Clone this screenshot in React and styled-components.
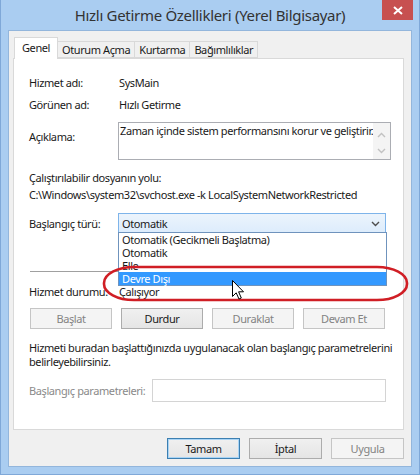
import React from 'react';
import styled, { createGlobalStyle } from 'styled-components';

const GlobalStyle = createGlobalStyle`
  html, body {
    margin: 0;
    padding: 0;
    background: #aacdf1;
  }
  body {
    width: 420px;
    height: 475px;
    overflow: hidden;
    font-family: "Noto Sans", "Open Sans", sans-serif;
    font-size: 11px;
    letter-spacing: -0.4px;
    color: #1a1a1a;
  }
`;

const Window = styled.div`
  position: relative;
  width: 420px;
  height: 475px;
  box-sizing: border-box;
  background: #aacdf1;
  border: 1px solid #7fa8d8;
  border-top: none;
  padding: 0 7px 7px 7px;
  display: flex;
  flex-direction: column;
`;

const TitleBar = styled.div`
  height: 30px;
  display: grid;
  grid-template-columns: 1fr auto 1fr;
  align-items: center;
`;

const Title = styled.div`
  grid-column: 2;
  font-size: 15px;
  letter-spacing: -0.3px;
  color: #333;
  white-space: nowrap;
`;

const CloseButton = styled.div`
  grid-column: 3;
  justify-self: end;
  align-self: start;
  width: 31px;
  height: 20px;
  margin-right: -1px;
  background: #c75050;
  display: flex;
  align-items: center;
  justify-content: center;
`;

const Client = styled.div`
  flex: 1;
  background: #f0f0f0;
  border: 1px solid #93b6dc;
  display: flex;
  flex-direction: column;
  padding: 6px 7px 7px 4px;
`;

const TabStrip = styled.div`
  display: flex;
  align-items: flex-end;
  height: 21px;
  padding-left: 1px;
  position: relative;
  z-index: 1;
`;

const Tab = styled.div`
  box-sizing: border-box;
  height: ${p => (p.$active ? '22px' : '17px')};
  margin-bottom: ${p => (p.$active ? '-1px' : '0')};
  padding: ${p => (p.$active ? '0 7px 3px' : '0 4px')};
  background: ${p => (p.$active ? '#fff' : '#f0f0f0')};
  border: 1px solid #d9d9d9;
  border-bottom: ${p => (p.$active ? 'none' : '1px solid #d9d9d9')};
  border-left: ${p => (p.$active ? '1px solid #d9d9d9' : 'none')};
  display: flex;
  align-items: center;
  white-space: nowrap;
`;

const Panel = styled.div`
  flex: 1;
  background: #fff;
  border: 1px solid #d9d9d9;
  padding: 16px 17px 0 15px;
  display: flex;
  flex-direction: column;
`;

const Row = styled.div`
  display: grid;
  grid-template-columns: ${p => p.$labelWidth || '89px'} 1fr;
  margin-top: ${p => p.$mt || 0}px;
  line-height: ${p => p.$lh || 16}px;
`;

const Label = styled.div`
  padding-top: ${p => p.$pt || 0}px;
  color: ${p => (p.$disabled ? '#8a8a8a' : 'inherit')};
  white-space: nowrap;
`;

const Value = styled.div`
  padding-left: 1px;
  white-space: nowrap;
`;

const TextArea = styled.div`
  height: 38px;
  box-sizing: border-box;
  border: 1px solid #abadb3;
  background: #fff;
  display: flex;
`;

const TextAreaText = styled.div`
  flex: 1;
  padding: 1px 0 0 1px;
  line-height: 14px;
  white-space: nowrap;
`;

const ScrollBar = styled.div`
  width: 17px;
  background: #f4f4f4;
  display: flex;
  flex-direction: column;
  justify-content: space-between;
  align-items: center;
  padding: 9px 0 5px;
`;

const Block = styled.div`
  margin-top: ${p => p.$mt || 0}px;
  line-height: ${p => p.$lh || 17}px;
  white-space: nowrap;
`;

const Combo = styled.div`
  position: relative;
  height: 21px;
  box-sizing: border-box;
  border: 1px solid #7eb4ea;
  background: linear-gradient(#ecf4fc, #dcecfc);
  display: flex;
  align-items: center;
  justify-content: space-between;
  padding: 0 5px 0 3px;
`;

const DropList = styled.div`
  position: absolute;
  left: -1px;
  right: -2px;
  top: calc(100% - 1px);
  border: 1px solid #6f93bd;
  background: #fff;
  z-index: 3;
`;

const DropItem = styled.div`
  height: 13px;
  line-height: 13px;
  padding-left: 3px;
  background: ${p => (p.$selected ? '#3399ff' : 'transparent')};
  color: ${p => (p.$selected ? '#fff' : 'inherit')};
  white-space: nowrap;
`;

const Separator = styled.div`
  margin: ${p => p.$mt || 0}px 0 0 1px;
  border-top: 1px solid #a0a0a0;
`;

const ButtonRow = styled.div`
  display: flex;
  gap: 9px;
  margin-top: ${p => p.$mt || 0}px;
  margin-left: ${p => p.$ml || 0}px;
  justify-content: ${p => (p.$end ? 'flex-end' : 'flex-start')};
`;

const Button = styled.div`
  width: ${p => p.$w || 82}px;
  height: 21px;
  box-sizing: border-box;
  display: flex;
  align-items: center;
  justify-content: center;
  border: 1px solid ${p => (p.$default ? '#3c7fb1' : p.$disabled ? '#c5c5c5' : '#acacac')};
  background: ${p => (p.$disabled ? '#f4f4f4' : 'linear-gradient(#f0f0f0, #e5e5e5)')};
  color: ${p => (p.$disabled ? '#838383' : '#1a1a1a')};
  box-shadow: ${p => (p.$default ? 'inset 0 0 0 1px #a9d4f5' : 'none')};
`;

const Paragraph = styled.div`
  margin-top: ${p => p.$mt || 0}px;
  line-height: 14px;
  white-space: nowrap;
`;

const Input = styled.div`
  height: 23px;
  box-sizing: border-box;
  border: 1px solid #d4d4d4;
  background: #fff;
`;

const Footer = styled.div`
  margin-top: 8px;
`;

const Annotation = styled.svg`
  position: absolute;
  left: 98px;
  top: 262px;
  z-index: 5;
`;

const Cursor = styled.svg`
  position: absolute;
  left: 231px;
  top: 280px;
  z-index: 6;
`;

const Chevron = ({ up, color = '#c2c2c2' }) => (
  <svg width="9" height="6" viewBox="0 0 9 6">
    <path
      d={up ? 'M1 5 L4.5 1.5 L8 5' : 'M1 1 L4.5 4.5 L8 1'}
      fill="none"
      stroke={color}
      strokeWidth="1.4"
    />
  </svg>
);

export default function App() {
  return (
    <>
      <GlobalStyle />
      <Window>
        <TitleBar>
          <Title>Hızlı Getirme Özellikleri (Yerel Bilgisayar)</Title>
          <CloseButton>
            <svg width="10" height="9" viewBox="0 0 10 9">
              <path d="M1 1 L9 8 M9 1 L1 8" stroke="#fff" strokeWidth="2" />
            </svg>
          </CloseButton>
        </TitleBar>

        <Client>
          <TabStrip>
            <Tab $active>Genel</Tab>
            <Tab>Oturum Açma</Tab>
            <Tab>Kurtarma</Tab>
            <Tab>Bağımlılıklar</Tab>
          </TabStrip>

          <Panel>
            <Row>
              <Label>Hizmet adı:</Label>
              <Value>SysMain</Value>
            </Row>
            <Row $mt={6}>
              <Label>Görünen ad:</Label>
              <Value>Hızlı Getirme</Value>
            </Row>
            <Row $mt={9}>
              <Label $pt={7}>Açıklama:</Label>
              <TextArea>
                <TextAreaText>Zaman içinde sistem performansını korur ve geliştirir.</TextAreaText>
                <ScrollBar>
                  <Chevron up />
                  <Chevron />
                </ScrollBar>
              </TextArea>
            </Row>

            <Block $mt={9}>
              Çalıştırılabilir dosyanın yolu:
              <br />
              C:\Windows\system32\svchost.exe -k LocalSystemNetworkRestricted
            </Block>

            <Row $mt={10} $lh={21}>
              <Label>Başlangıç türü:</Label>
              <Combo>
                <span>Otomatik</span>
                <Chevron color="#4d4d4d" />
                <DropList>
                  <DropItem>Otomatik (Gecikmeli Başlatma)</DropItem>
                  <DropItem>Otomatik</DropItem>
                  <DropItem>Elle</DropItem>
                  <DropItem $selected>Devre Dışı</DropItem>
                </DropList>
              </Combo>
            </Row>

            <Separator $mt={37} />

            <Row $mt={12}>
              <Label>Hizmet durumu:</Label>
              <Value>Çalışıyor</Value>
            </Row>

            <ButtonRow $mt={8} $ml={1}>
              <Button $disabled>Başlat</Button>
              <Button>Durdur</Button>
              <Button $disabled>Duraklat</Button>
              <Button $disabled>Devam Et</Button>
            </ButtonRow>

            <Paragraph $mt={12}>
              Hizmeti buradan başlattığınızda uygulanacak olan başlangıç parametrelerini
              <br />
              belirleyebilirsiniz.
            </Paragraph>

            <Row $mt={10} $lh={23} $labelWidth="123px">
              <Label $disabled>Başlangıç parametreleri:</Label>
              <Input />
            </Row>
          </Panel>

          <Footer>
            <ButtonRow $end>
              <Button $w={73} $default>Tamam</Button>
              <Button $w={73}>İptal</Button>
              <Button $w={73} $disabled>Uygula</Button>
            </ButtonRow>
          </Footer>
        </Client>

        <Annotation width="314" height="44" viewBox="0 0 314 44">
          <rect
            x="5"
            y="5"
            width="303"
            height="33"
            rx="30"
            ry="16"
            fill="none"
            stroke="#d01e25"
            strokeWidth="2.6"
          />
        </Annotation>

        <Cursor width="13" height="20" viewBox="0 0 13 20">
          <path
            d="M0.5 0.5 L0.5 16.5 L4.2 12.8 L7 19 L9.3 18 L6.6 11.8 L11.5 11.8 Z"
            fill="#fff"
            stroke="#000"
            strokeWidth="1"
            strokeLinejoin="round"
          />
        </Cursor>
      </Window>
    </>
  );
}
